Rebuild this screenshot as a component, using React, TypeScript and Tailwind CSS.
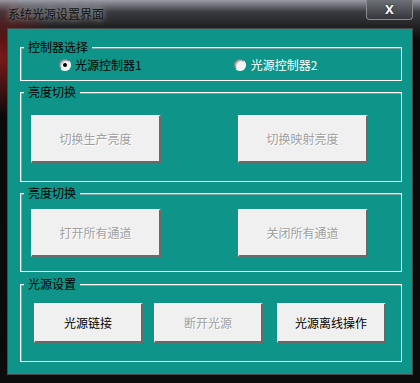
function Btn({ label, disabled, w, h }: { label: string; disabled?: boolean; w: string; h: string }) {
	return (
		<div
			className={`${w} ${h} flex items-center justify-center bg-[#f0f0f0] border-t border-l border-t-white border-l-white border-r-2 border-b-2 border-r-[#696969] border-b-[#696969] text-[12px] ${
				disabled ? 'text-[#a0a0a0] [text-shadow:1px_1px_0_#fff]' : 'text-black'
			}`}>
			{label}
		</div>
	);
}

function Group({ title, className, children }: { title: string; className: string; children: React.ReactNode }) {
	return (
		<fieldset
			className={`ml-[12px] w-[382px] border border-white shadow-[inset_1px_1px_0_rgba(170,170,170,0.7)] p-0 ${className}`}>
			<legend className="ml-[3px] px-[4px] bg-[#0e9488] text-[12px] leading-[14px] text-black">{title}</legend>
			{children}
		</fieldset>
	);
}

function Radio({ checked }: { checked?: boolean }) {
	return (
		<span className="w-[12px] h-[12px] rounded-full border border-t-[#808080] border-l-[#808080] border-r-white border-b-white bg-[#f4f4f4] flex items-center justify-center shadow-[inset_1px_1px_1px_#a0a0a0]">
			{checked && <span className="w-[4px] h-[4px] rounded-full bg-black" />}
		</span>
	);
}

export default function App() {
	return (
		<div className="w-[420px] h-[383px] flex flex-col overflow-hidden font-['Noto_Sans_CJK_SC',sans-serif] bg-[radial-gradient(circle_at_0%_15%,#7a1a1a_0,transparent_60px),linear-gradient(to_bottom,#9a9ca6_0,#3a3b40_12px,#0a0a0a_40px,#0c0c0c_100%)]">
			{/* <TitleBar> */}
			<div className="h-[28px] flex items-start">
				<span className="pl-[8px] pt-[7px] text-[12px] leading-[14px] text-[#111] [text-shadow:0_0_6px_rgba(255,255,255,0.8)]">
					系统光源设置界面
				</span>
				<div className="ml-auto mr-[7px] w-[47px] h-[20px] rounded-b-[4px] border border-t-0 border-[#8a8a8a] bg-[linear-gradient(to_bottom,#6e7078,#35363c)] flex items-center justify-center text-[#f0f0f0] text-[12px] font-bold leading-none font-['DejaVu_Sans',sans-serif] [text-shadow:0_0_2px_#000]">
					X
				</div>
			</div>
			{/* </TitleBar> */}

			{/* <Client> */}
			<div className="mx-[7px] h-[347px] border border-[#4a4a4a] bg-[#0e9488] flex flex-col">
				<Group title="控制器选择" className="mt-[11px] h-[41px]">
					<div className="mt-[5px] flex items-center text-[12px] leading-[12px]">
						<div className="ml-[38px] flex items-center gap-[4px] text-black">
							<Radio checked />
							<span>光源控制器1</span>
						</div>
						<div className="ml-[92px] flex items-center gap-[5px] text-white">
							<Radio />
							<span>光源控制器2</span>
						</div>
					</div>
				</Group>

				<Group title="亮度切换" className="mt-[4px] h-[97px]">
					<div className="mt-[16px] ml-[10px] flex gap-[77px]">
						<Btn label="切换生产亮度" disabled w="w-[130px]" h="h-[48px]" />
						<Btn label="切换映射亮度" disabled w="w-[130px]" h="h-[48px]" />
					</div>
				</Group>

				<Group title="亮度切换" className="mt-[4px] h-[86px]">
					<div className="mt-[9px] ml-[10px] flex gap-[77px]">
						<Btn label="打开所有通道" disabled w="w-[130px]" h="h-[48px]" />
						<Btn label="关闭所有通道" disabled w="w-[130px]" h="h-[48px]" />
					</div>
				</Group>

				<Group title="光源设置" className="mt-[5px] h-[85px]">
					<div className="mt-[12px] ml-[13px] flex gap-[11px]">
						<Btn label="光源链接" w="w-[109px]" h="h-[40px]" />
						<Btn label="断开光源" disabled w="w-[109px]" h="h-[40px]" />
						<div className="ml-[3px]">
							<Btn label="光源离线操作" w="w-[109px]" h="h-[40px]" />
						</div>
					</div>
				</Group>
			</div>
			{/* </Client> */}
		</div>
	);
}
